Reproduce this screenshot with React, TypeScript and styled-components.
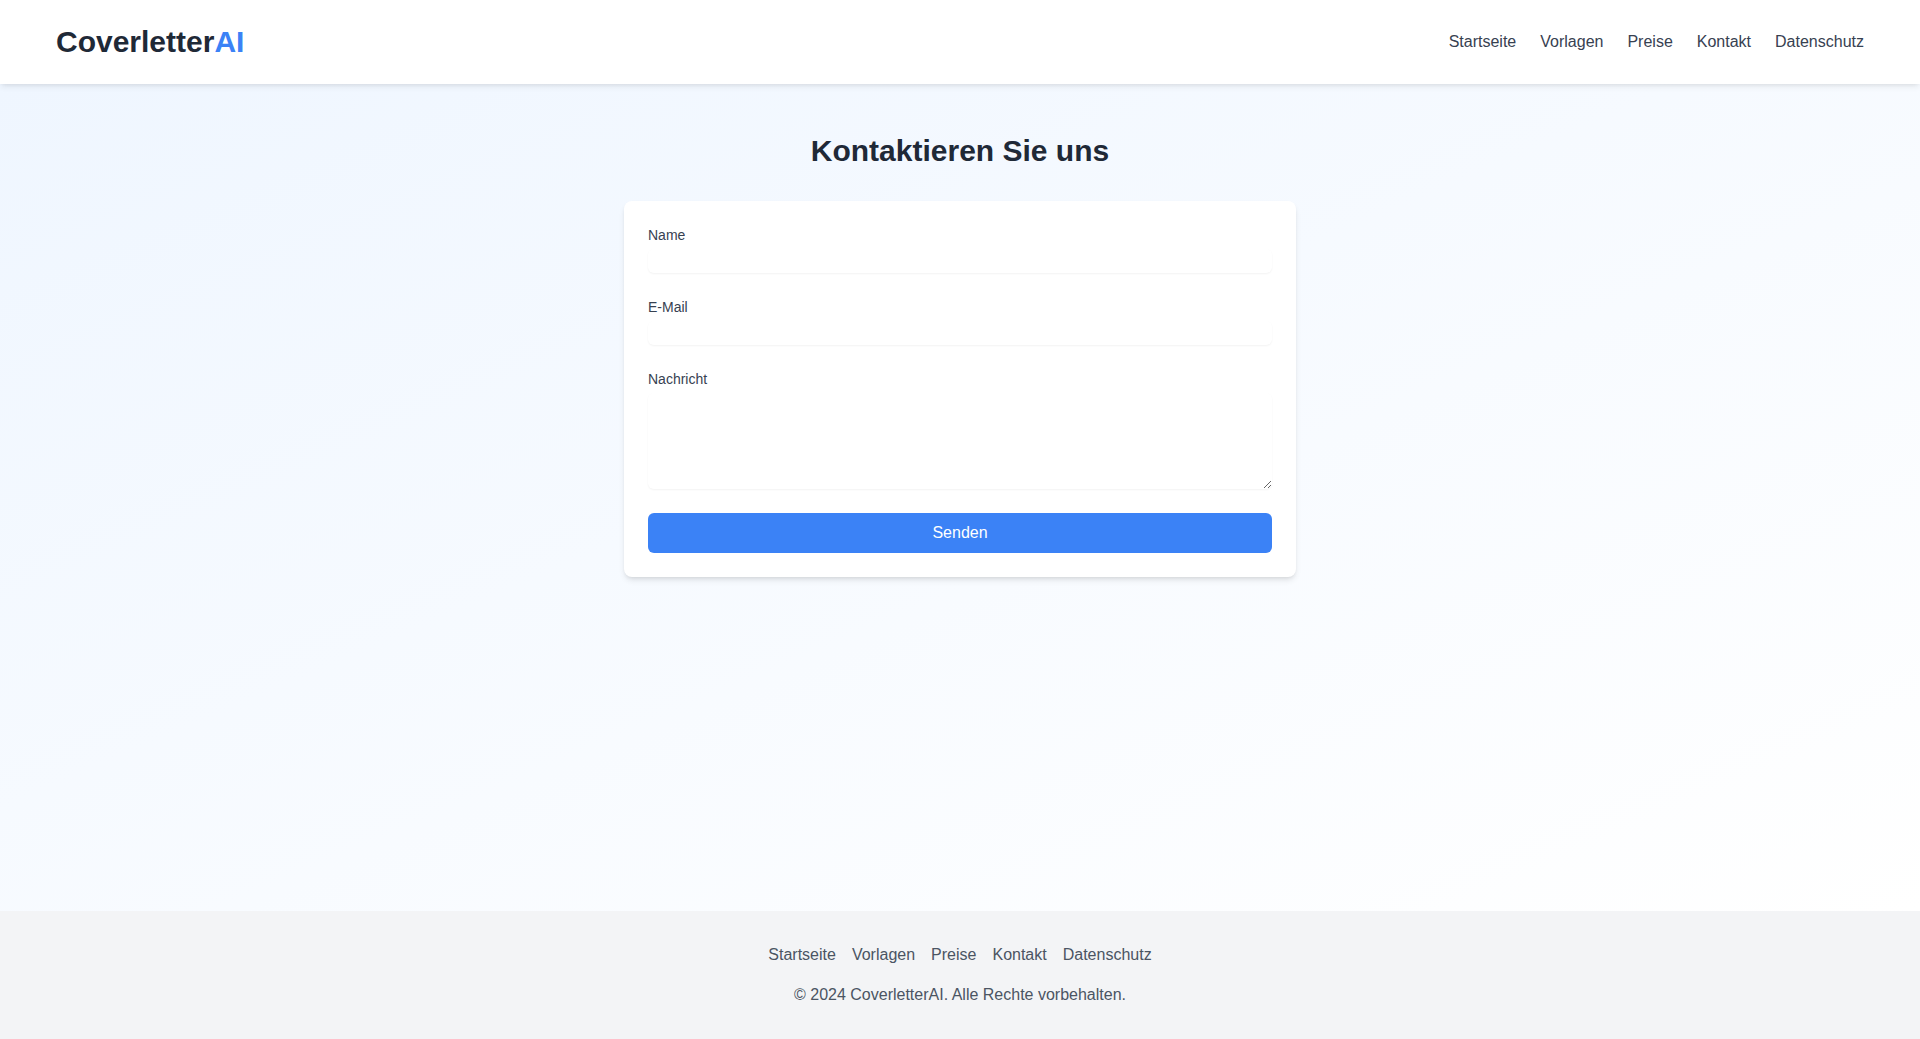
import React from "react";
import styled, { createGlobalStyle } from "styled-components";

const GlobalStyle = createGlobalStyle`
  *, *::before, *::after { box-sizing: border-box; }
  html, body { margin: 0; padding: 0; }
  body {
    font-family: "Liberation Sans", Arial, Helvetica, sans-serif;
    font-size: 16px;
    line-height: 1.5;
    color: #1f2937;
    background: #ffffff;
  }
`;

const Page = styled.div`
  min-height: 100vh;
  display: flex;
  flex-direction: column;
`;

const Header = styled.header`
  background: #ffffff;
  box-shadow: 0 4px 6px -1px rgba(0, 0, 0, 0.07), 0 2px 4px -2px rgba(0, 0, 0, 0.07);
  position: relative;
  z-index: 1;
`;

const HeaderInner = styled.div`
  height: 84px;
  padding: 0 56px;
  display: flex;
  align-items: center;
  justify-content: space-between;
`;

const Logo = styled.a`
  font-size: 30px;
  line-height: 36px;
  font-weight: 700;
  color: #1f2937;
  text-decoration: none;
`;

const LogoAccent = styled.span`
  color: #3b82f6;
`;

const Nav = styled.nav`
  display: flex;
  gap: 24px;
`;

const NavLink = styled.a`
  font-size: 16px;
  line-height: 24px;
  color: #374151;
  text-decoration: none;
`;

const Main = styled.main`
  flex: 1;
  background: linear-gradient(to bottom right, #eff6ff, #ffffff);
  padding: 49px 16px 48px;
`;

const Title = styled.h1`
  margin: 0 0 32px;
  text-align: center;
  font-size: 30px;
  line-height: 36px;
  font-weight: 700;
  color: #1f2937;
`;

const Card = styled.form`
  max-width: 672px;
  margin: 0 auto;
  background: #ffffff;
  border-radius: 8px;
  padding: 24px;
  box-shadow: 0 4px 6px -1px rgba(0, 0, 0, 0.1), 0 2px 4px -2px rgba(0, 0, 0, 0.1);
  display: flex;
  flex-direction: column;
  gap: 24px;
`;

const Field = styled.div`
  display: flex;
  flex-direction: column;
  gap: 4px;
`;

const Label = styled.label`
  font-size: 14px;
  line-height: 20px;
  font-weight: 500;
  color: #374151;
`;

const inputBase = `
  display: block;
  width: 100%;
  border: 0;
  padding: 0;
  margin: 0;
  font-family: inherit;
  font-size: 16px;
  line-height: 24px;
  color: inherit;
  background: #ffffff;
  border-radius: 6px;
  box-shadow: 0 1px 2px 0 rgba(0, 0, 0, 0.05);
  outline: none;
`;

const Input = styled.input`
  ${inputBase}
  height: 24px;
`;

const TextArea = styled.textarea`
  ${inputBase}
  height: 96px;
  resize: vertical;
`;

const SubmitButton = styled.button`
  width: 100%;
  height: 40px;
  border: 0;
  border-radius: 6px;
  background: #3b82f6;
  color: #ffffff;
  font-family: inherit;
  font-size: 16px;
  line-height: 24px;
  cursor: pointer;
`;

const Footer = styled.footer`
  background: #f3f4f6;
  padding: 32px 16px;
  display: flex;
  flex-direction: column;
  align-items: center;
  gap: 16px;
`;

const FooterNav = styled.nav`
  display: flex;
  gap: 16px;
`;

const FooterLink = styled.a`
  font-size: 16px;
  line-height: 24px;
  color: #4b5563;
  text-decoration: none;
`;

const Copyright = styled.p`
  margin: 0;
  font-size: 16px;
  line-height: 24px;
  color: #4b5563;
`;

const links = ["Startseite", "Vorlagen", "Preise", "Kontakt", "Datenschutz"];

export default function App() {
  return (
    <>
      <GlobalStyle />
      <Page>
        <Header>
          <HeaderInner>
            <Logo href="#">
              Coverletter<LogoAccent>AI</LogoAccent>
            </Logo>
            <Nav>
              {links.map((l) => (
                <NavLink key={l} href="#">
                  {l}
                </NavLink>
              ))}
            </Nav>
          </HeaderInner>
        </Header>
        <Main>
          <Title>Kontaktieren Sie uns</Title>
          <Card onSubmit={(e) => e.preventDefault()}>
            <Field>
              <Label htmlFor="name">Name</Label>
              <Input id="name" type="text" />
            </Field>
            <Field>
              <Label htmlFor="email">E-Mail</Label>
              <Input id="email" type="email" />
            </Field>
            <Field>
              <Label htmlFor="message">Nachricht</Label>
              <TextArea id="message" rows={4} />
            </Field>
            <SubmitButton type="submit">Senden</SubmitButton>
          </Card>
        </Main>
        <Footer>
          <FooterNav>
            {links.map((l) => (
              <FooterLink key={l} href="#">
                {l}
              </FooterLink>
            ))}
          </FooterNav>
          <Copyright>© 2024 CoverletterAI. Alle Rechte vorbehalten.</Copyright>
        </Footer>
      </Page>
    </>
  );
}
